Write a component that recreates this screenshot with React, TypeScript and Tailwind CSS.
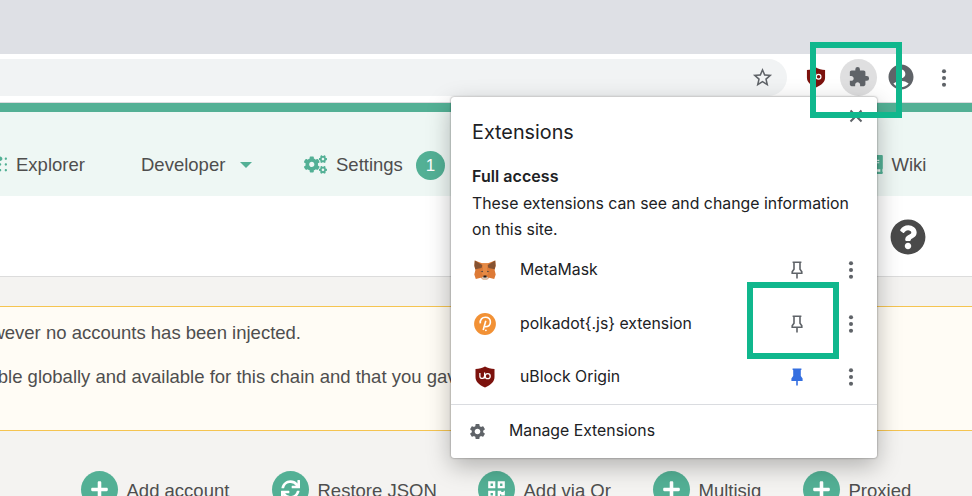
import type { ReactNode } from "react";
import { FaBook, FaBraille, FaCogs, FaPlus, FaQrcode, FaQuestionCircle, FaSync } from "react-icons/fa";
import { MdAccountCircle, MdExtension, MdSettings, MdStarBorder } from "react-icons/md";

function Shield({ className }: { className: string }) {
  return (
    <svg viewBox="0 0 20 22" className={className}>
      <path d="M10 .6C7.500 2.300 4 3 .5 3.100V11c0 5 3.600 7.700 9.500 10.500 5.900-2.800 9.500-5.500 9.500-10.500V3.100C16 3 12.500 2.300 10 .6Z" fill="#7c120d" />
      <path d="M4.900 7v3.200a2.200 2.200 0 0 0 4.400 0M9.600 6.600v5.900" fill="none" stroke="#fff" strokeWidth="1.250" />
      <circle cx="12.700" cy="10.200" r="2.500" fill="none" stroke="#fff" strokeWidth="1.250" />
    </svg>
  );
}

function Fox() {
  return (
    <svg viewBox="0 0 22 20" className="h-5 w-[22px]">
      <path d="M.8.4 8 3.200h6L21.200.4l.4 5.600-1 4 1.100 4.500-1.500 4.600-5-1.300-2 1.600H8.800l-2-1.600-5 1.300L.3 14.500 1.400 10l-1-4Z" fill="#dd7a36" />
      <path d="M.8.4 8.600 5.200 7.500 8 1.300 9.200.4 5.500ZM21.200.4l-7.800 4.800L14.500 8l6.200 1.200.9-3.700Z" fill="#865231" />
      <path d="m8 3.200 3 .2 3-.2-1 5.300 1.200 5.500-3.200 2-3.200-2L9 8.500Z" fill="#e68a45" />
      <path d="m6.500 11.600 2.200-.8.3 1.500ZM15.500 11.600l-2.200-.8-.3 1.500Z" fill="#4d4542" />
      <path d="m7.500 17.500 2-1h3l2 1-1.500 2H9Z" fill="#d8c5b5" />
      <path d="m9.400 16 .5-.6h2.200l.5.600-.2 1.600H9.600Z" fill="#201b1a" />
    </svg>
  );
}

function Polkadot() {
  return (
    <svg viewBox="0 0 22 22" className="size-[22px]">
      <circle cx="11" cy="11" r="10.900" fill="#f29135" />
      <path d="M6.300 10.300C5.800 6.500 8.300 4.300 11.300 4.300c3.200 0 5.100 2.100 5.100 4.800 0 2.900-2.200 4.700-5.400 4.700" fill="none" stroke="#fff" strokeWidth="1.600" />
      <path d="M11.800 7.700 9.200 17" fill="none" stroke="#fff" strokeWidth="1.600" />
      <circle cx="11.900" cy="17.300" r=".9" fill="#fff" />
    </svg>
  );
}

function Pin({ pinned }: { pinned?: boolean }) {
  return (
    <svg viewBox="0 0 12 18" className="h-[18px] w-3">
      <path
        d="M1.600 1.300h8.800M3 1.300v7L1.200 10.800v1.400h9.600v-1.400L9 8.300v-7M6 12.200v5.400"
        fill={pinned ? "#356fe0" : "none"}
        stroke={pinned ? "#356fe0" : "#5f6368"}
        strokeWidth="1.600"
      />
    </svg>
  );
}

function Dots() {
  return (
    <svg viewBox="0 0 6 20" className="h-5 w-1.5 shrink-0 fill-[#5f6368]">
      <circle cx="3" cy="3.300" r="2.050" />
      <circle cx="3" cy="10" r="2.050" />
      <circle cx="3" cy="16.700" r="2.050" />
    </svg>
  );
}

function ExtensionRow({ icon, name, pinned }: { icon: ReactNode; name: string; pinned?: boolean }) {
  return (
    <div className="flex h-[53.400px] items-center pl-[23px] pr-[23.500px]">
      <span className="flex w-[46px]">{icon}</span>
      <span className="flex-1 text-[15.800px]">{name}</span>
      <Pin pinned={pinned} />
      <span className="ml-[44.500px] flex">
        <Dots />
      </span>
    </div>
  );
}

function Action({ icon, label, className }: { icon: ReactNode; label: string; className: string }) {
  return (
    <div className={`flex shrink-0 items-center gap-[8.500px] ${className}`}>
      <span className="flex size-[37px] shrink-0 items-center justify-center rounded-full bg-[#53b095] text-[19px] text-white">{icon}</span>
      <span className="whitespace-nowrap pt-[3px]">{label}</span>
    </div>
  );
}

export default function App() {
  return (
    <div className="relative h-[496px] w-[972px] overflow-hidden bg-[#f4f3f1] font-['Liberation_Sans',Arial,sans-serif] text-[18.500px] text-[#4e4e4e]">
      <div className="h-[54px] bg-[#dee0e5]" />
      <div className="flex h-[49px] items-center border-b border-[#dcdcdf] bg-white pb-0.5 text-[#5f6368]">
        <div className="flex h-[37px] w-[787px] items-center justify-end rounded-r-full bg-[#f1f3f4] pr-[13px]">
          <MdStarBorder className="size-[23px]" />
        </div>
        <Shield className="ml-[19px] mt-px h-[21px] w-5" />
        <div className="ml-3.5 flex size-[37px] items-center justify-center rounded-full bg-[#dfdfe0]">
          <MdExtension className="size-[22px]" />
        </div>
        <MdAccountCircle className="ml-[9px] size-[30px]" />
        <span className="ml-[25px] mt-px flex">
          <Dots />
        </span>
      </div>
      <div className="h-[9px] bg-[#53b095]" />
      <nav className="flex h-[84px] items-center bg-[#eef7f4] pb-[3px] pt-[24px]">
        <FaBraille className="-ml-4 size-[23px] shrink-0 text-[#53b095]" />
        <span className="ml-[9px] w-[125px]">Explorer</span>
        <span className="w-[99px]">Developer</span>
        <span className="mt-px h-0 w-0 border-x-[6px] border-t-[6px] border-x-transparent border-t-[#53b095]" />
        <FaCogs className="ml-[52px] size-[23px] text-[#53b095]" />
        <span className="ml-[9px] w-[80px]">Settings</span>
        <span className="mt-[2px] flex size-[29px] items-center justify-center rounded-full bg-[#53b095] text-[17px] text-white">1</span>
        <FaBook className="ml-[420px] size-[19px] text-[#53b095]" />
        <span className="ml-[7.500px]">Wiki</span>
      </nav>
      <div className="flex h-[81px] items-center justify-end border-b border-[#dcdcdc] bg-white pr-[46px] pt-px">
        <FaQuestionCircle className="size-[36px] text-[#4a4a4a]" />
      </div>
      <div className="mt-[29px] h-[125px] border-y border-[#f5c451] bg-[#fffcf5] pt-[15px] leading-[22px]">
        <p className="flex w-[301px] justify-end whitespace-nowrap">however no accounts has been injected.</p>
        <p className="-ml-[12.500px] mt-[22px] whitespace-nowrap">able globally and available for this chain and that you gave access</p>
      </div>
      <div className="mt-[40px] flex h-[37px] pl-[81px]">
        <Action className="w-[191px]" icon={<FaPlus />} label="Add account" />
        <Action className="w-[206px]" icon={<FaSync />} label="Restore JSON" />
        <Action className="w-[175px]" icon={<FaQrcode />} label="Add via Qr" />
        <Action className="w-[150px]" icon={<FaPlus />} label="Multisig" />
        <Action className="w-[140px]" icon={<FaPlus />} label="Proxied" />
      </div>

      <section className="absolute left-[451px] top-[97px] h-[361px] w-[426px] rounded-[3px] bg-white font-[Inter,sans-serif] text-[#202124] shadow-[0_0_2px_rgba(0,0,0,0.500),0_8px_24px_rgba(0,0,0,0.280)]">
        <div className="flex h-[64px] justify-between pl-[21px] pr-[14px]">
          <h1 className="pt-[21px] text-[19.800px] leading-7">Extensions</h1>
          <svg viewBox="0 0 14 14" className="mt-[12px] size-3.5 fill-none stroke-[#5f6368] stroke-2">
            <path d="m1.500 1.500 11 11m0-11-11 11" />
          </svg>
        </div>
        <div className="h-[82.500px] pl-[21px] pt-[3px]">
          <h2 className="text-[16px] font-semibold leading-6 tracking-[0.050px]">Full access</h2>
          <p className="pt-[2.500px] text-[15.850px] leading-[26.500px]">
            These extensions can see and change information
            <br />
            on this site.
          </p>
        </div>
        <ExtensionRow icon={<Fox />} name="MetaMask" />
        <ExtensionRow icon={<Polkadot />} name="polkadot{.js} extension" />
        <ExtensionRow icon={<Shield className="ml-px h-[22px] w-5" />} name="uBlock Origin" pinned />
        <div className="flex h-[54px] items-center border-t border-[#dadce0] pl-[17px] text-[15.800px]">
          <MdSettings className="size-[19px] text-[#5f6368]" />
          <span className="ml-[22px]">Manage Extensions</span>
        </div>
      </section>

      <div className="absolute left-[810px] top-[42px] h-[76px] w-[92px] border-[6.500px] border-[#10b78d]" />
      <div className="absolute left-[747px] top-[282px] h-[77px] w-[92px] border-[6.500px] border-[#10b78d]" />
    </div>
  );
}
